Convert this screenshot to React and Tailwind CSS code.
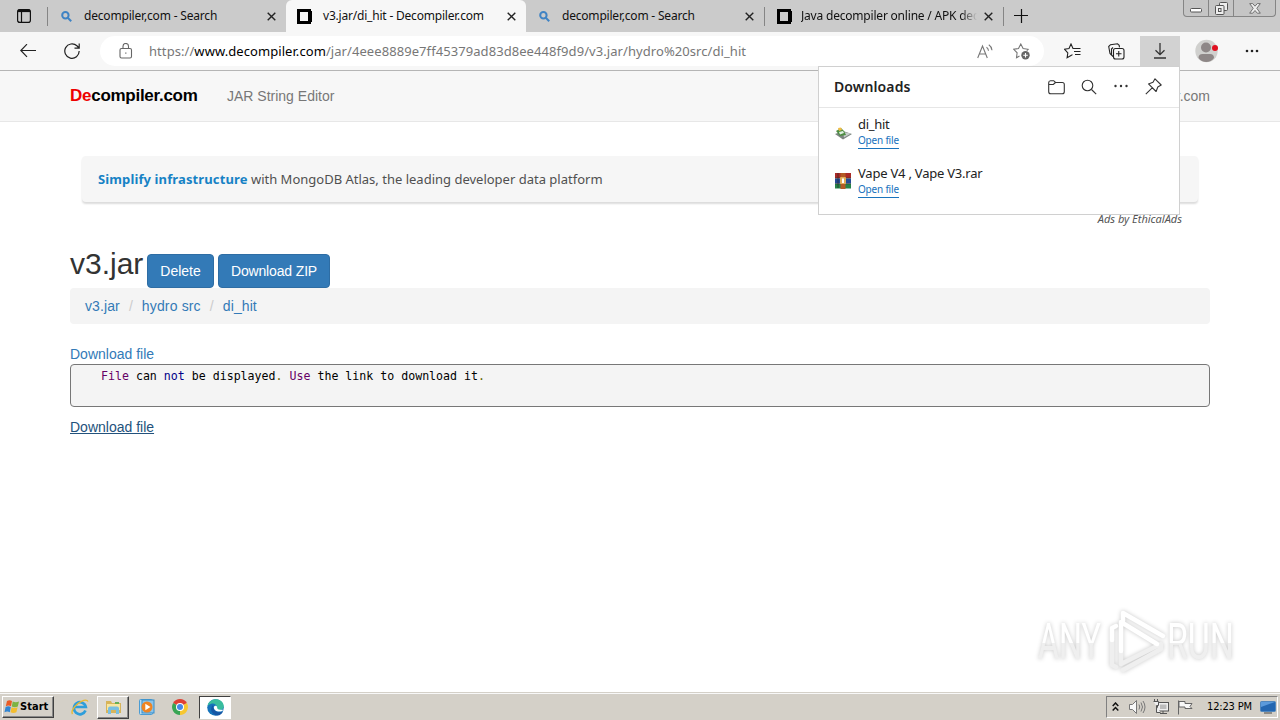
import React from 'react';

const ui = "font-['Noto_Sans',sans-serif]";
const arial = "font-['Liberation_Sans',sans-serif]";

const CloseIcon = () => (
  <svg width="9" height="9" viewBox="0 0 9 9" fill="none" stroke="#222" strokeWidth="1.4">
    <path d="M.7.7l7.6 7.6M8.3.7L.7 8.3" />
  </svg>
);

const SearchFavicon = () => (
  <svg className="ml-px" width="11" height="11" viewBox="0 0 11 11" fill="none" stroke="#3f83c4" strokeWidth="2">
    <circle cx="4.4" cy="4.2" r="3.2" />
    <path d="M6.8 6.8L10.2 10.2" />
  </svg>
);

const DecompilerFavicon = () => (
  <svg width="15" height="15" viewBox="0 0 15 15" fill="none">
    <rect x="1.5" y="1.5" width="11" height="12" stroke="#000" strokeWidth="3" />
    <path fill="#000" d="M13 2h2v11h-2z" />
  </svg>
);

const Tab = ({ title, icon, active, clip, titleClass }) => (
  <div className={`flex h-8 shrink-0 items-center ${active ? 'w-[240px] rounded-t-md bg-[#f7f7f7] pl-[11px]' : 'w-[238px] pl-3'}`}>
    <div className="flex w-[17px] shrink-0">{icon}</div>
    <div className={`shrink-0 whitespace-nowrap text-[12px] leading-[18px] text-[#111] ${ui} ${titleClass} ${clip ? '[mask-image:linear-gradient(to_right,black_160px,transparent_176px)]' : ''}`}>
      {title}
    </div>
    <div className="ml-auto pr-[10px]"><CloseIcon /></div>
  </div>
);

const TabStrip = () => (
  <div className="flex h-8 shrink-0 bg-[#cbcbcb]">
    <div className="flex w-[47px] items-center justify-center">
      <svg width="14" height="14" viewBox="0 0 14 14" fill="none" stroke="#111">
        <rect x=".6" y=".6" width="12.8" height="12.8" rx="2.2" strokeWidth="1.2" />
        <path d="M1 2.5h12M4.5 3v10" strokeWidth="1.2" />
        <path d="M1 1.8h12" strokeWidth="2.6" />
      </svg>
    </div>
    <div className="mt-[7px] h-[19px] w-px bg-[#858585]" />
    <Tab title="decompiler,com - Search" icon={<SearchFavicon />} titleClass="ml-[7px] tracking-[-0.18px]" />
    <Tab title="v3.jar/di_hit - Decompiler.com" icon={<DecompilerFavicon />} active titleClass="ml-[9px] tracking-[-0.2px]" />
    <Tab title="decompiler,com - Search" icon={<SearchFavicon />} titleClass="ml-[7px] tracking-[-0.2px]" />
    <div className="mt-[7px] h-[19px] w-px bg-[#858585]" />
    <Tab title="Java decompiler online / APK dec" icon={<DecompilerFavicon />} clip titleClass="ml-[7px] tracking-[-0.2px]" />
    <div className="mt-[7px] h-[19px] w-px bg-[#858585]" />
    <svg className="mt-[9px] ml-[10px]" width="14" height="14" viewBox="0 0 14 14" stroke="#111" strokeWidth="1.2">
      <path d="M7.500 0v14M0 6.500h14" />
    </svg>
    {/* window controls */}
    <div className="mr-[4px] ml-auto flex h-[17px] w-[93px] overflow-hidden rounded-b-[4px] border border-t-0 border-[#858585] bg-[#c5c5c5]">
      <div className="flex w-[25px] items-end justify-center border-r border-[#858585] pb-[3px]">
        <svg width="12" height="5" viewBox="0 0 12 5"><rect x=".5" y=".5" width="11" height="3.5" rx="1" fill="#fff" stroke="#555" /></svg>
      </div>
      <div className="flex w-[25px] items-center justify-center border-r border-[#858585]">
        <svg width="13" height="13" viewBox="0 0 13 13" fill="#eee" stroke="#555">
          <rect x="4.5" y=".5" width="8" height="8" rx="1" />
          <rect x=".5" y="3.5" width="8.500" height="9" rx="1" />
          <rect x="3.500" y="6.500" width="2.500" height="3" />
        </svg>
      </div>
      <div className="flex flex-1 items-center justify-center">
        <svg width="12" height="11" viewBox="0 0 12 11" fill="#eee" stroke="#666" strokeWidth=".9">
          <path d="M.7.6h3L6 3.200 8.300.6h3L7.800 5.300l3.500 4.900h-3L6 7.500l-2.300 2.700h-3l3.500-4.900z" />
        </svg>
      </div>
    </div>
  </div>
);

const Toolbar = () => (
  <div className="flex h-[39px] shrink-0 items-center border-b border-[#b5b5b5] bg-[#f7f7f7]">
    <svg className="ml-5" width="16" height="14" viewBox="0 0 16 14" fill="none" stroke="#222" strokeWidth="1.2">
      <path d="M7 .2L.8 6.500 7 12.800M1 6.500h15" />
    </svg>
    <svg className="ml-[28px]" width="16" height="16" viewBox="0 0 16 16" fill="none" stroke="#222" strokeWidth="1.2">
      <path d="M15.200 8a7.200 7.200 0 1 1-2.300-5.200L15 5M15.200.5V5.200h-4.700" />
    </svg>
    <div className="ml-[20px] flex h-[30px] w-[944px] items-center rounded-full bg-white">
      <svg className="ml-[19px]" width="14" height="16" viewBox="0 0 14 16" fill="none" stroke="#666" strokeWidth="1.100">
        <rect x="1" y="5.500" width="11.500" height="9.500" rx="1.500" />
        <path d="M4 5.500V3.200a2.700 2.700 0 0 1 5.500 0v2.300" />
        <rect x="6.200" y="9.500" width="1.200" height="1.200" fill="#666" stroke="none" />
      </svg>
      <div className={`ml-4 pt-px whitespace-nowrap text-[13px] tracking-[0.07px] text-[#777] ${ui}`}>
        https://<span className="text-black">www.decompiler.com</span>/jar/4eee8889e7ff45379ad83d8ee448f9d9/v3.jar/hydro%20src/di_hit
      </div>
      <svg className="ml-auto" width="16" height="15" viewBox="0 0 16 15" fill="none" stroke="#777" strokeWidth="1.100">
        <path d="M.7 14L5.500 2l4.800 12M2.400 10h6.200M9.500 3.200c1.200.8 1.900 2 2 3.500M11.800.8c2 1.300 3 3.200 3.200 5.500" />
      </svg>
      <svg className="mr-[14px] ml-[20px]" width="17" height="17" viewBox="0 0 17 17" fill="none" stroke="#777" strokeWidth="1.100">
        <path d="M6.500 13L3.500 14.800l.6-5L.7 6.300l4.800-.8L7.800 1l2.300 4.500 5 .8-1.300 1.300" />
        <circle cx="12.500" cy="12.300" r="4.200" fill="#666" stroke="none" />
        <path d="M12.500 10v4.600M10.200 12.300h4.600" stroke="#fff" />
      </svg>
    </div>
    <svg className="ml-[20px]" width="17" height="16" viewBox="0 0 17 16" fill="none" stroke="#222" strokeWidth="1.100">
      <path d="M9.500 5.500H9L7 1 5 5.500l-4.500.7L3.800 10l-.7 4.800L7 12.500l1.500-.9M9.500 5.500h7M10 8.500h6.500M11 11.500h5.500" />
    </svg>
    <svg className="ml-[27px]" width="17" height="17" viewBox="0 0 17 17" fill="none" stroke="#222" strokeWidth="1.100">
      <path d="M3.500 12L2 10.500.7 3.500 2.500 1.700l7-.9 1.700 1.500.3 2M5 4.500L3.500 6v6L5 13.500" />
      <rect x="5.500" y="5.500" width="10.500" height="10.500" rx="2" />
      <path d="M10.750 8v5.500M8 10.750h5.500" />
    </svg>
    <div className="ml-[15px] flex h-[30px] w-10 items-center justify-center bg-[#d2d2d2]">
      <svg width="13" height="16" viewBox="0 0 13 16" fill="none" stroke="#333" strokeWidth="1.300">
        <path d="M6 0v11.500M1.500 7.200L6 11.700l4.500-4.500M0 15h12" />
      </svg>
    </div>
    <svg className="ml-[15px]" width="24" height="24" viewBox="0 0 24 24">
      <circle cx="11.500" cy="12" r="11.200" fill="#d0d0ce" />
      <circle cx="11" cy="8.500" r="5" fill="#8e8787" />
      <path d="M3.500 19q0-4 4-4h7.500q4 0 4 4c-3.500 5.300-12 5.300-15.500 0z" fill="#8e8787" />
      <circle cx="20" cy="9" r="3" fill="#e01020" />
    </svg>
    <svg className="ml-[26px]" width="14" height="4" viewBox="0 0 14 4" fill="#222">
      <circle cx="2" cy="2" r="1.300" /><circle cx="7" cy="2" r="1.300" /><circle cx="12" cy="2" r="1.300" />
    </svg>
  </div>
);

const DownloadItem = ({ name, icon, nameClass }) => (
  <div className="flex h-[49px] items-start pl-4">
    <div className="mt-[12px] w-[23px]">{icon}</div>
    <div className="flex flex-col items-start">
      <span className={`text-[13px] leading-[18px] whitespace-pre text-[#222] ${nameClass}`}>{name}</span>
      <span className="h-4 border-b border-[#1b74bd] text-[10px] leading-[14px] tracking-[-0.2px] text-[#1671bd]">Open file</span>
    </div>
  </div>
);

const DownloadsPanel = () => (
  <div className={`absolute top-[66px] left-[818px] h-[149px] w-[362px] border border-[#d0d0d0] bg-white ${ui}`}>
    <div className="flex h-[41px] items-center border-b border-[#e6e6e6] pl-[15px]">
      <div className="pb-[2px] text-[14px] font-semibold tracking-[0.1px] text-[#222]">Downloads</div>
      <svg className="ml-auto" width="17" height="15" viewBox="0 0 17 15" fill="none" stroke="#333" strokeWidth="1.100">
        <path d="M.7 2.700Q.7.700 2.500.7h3.200L7.500 2.500h6.800q2 0 2 2v7.300q0 2-2 2H2.700q-2 0-2-2zM.8 4.500h4.500L7.500 2.500" />
      </svg>
      <svg className="ml-4" width="16" height="16" viewBox="0 0 16 16" fill="none" stroke="#333" strokeWidth="1.100">
        <circle cx="6.500" cy="6.500" r="5.300" /><path d="M10.500 10.500l4.700 4.700" />
      </svg>
      <svg className="mb-[2px] ml-[17px]" width="14" height="4" viewBox="0 0 14 4" fill="#333">
        <circle cx="1.500" cy="2" r="1.200" /><circle cx="7" cy="2" r="1.200" /><circle cx="12.500" cy="2" r="1.200" />
      </svg>
      <svg className="mr-[17px] mb-[2px] ml-[17px]" width="17" height="17" viewBox="0 0 17 17" fill="none" stroke="#333" strokeWidth="1.100">
        <path d="M10 .8L16.200 7 12.800 9l-1.700 4.500-7.600-7.600L8 4.300zM7.200 9.800L.8 16.200" strokeLinejoin="round" />
      </svg>
    </div>
    <div className="pt-[7px]">
      <DownloadItem
        name="di_hit"
        nameClass="tracking-[-0.3px]"
        icon={
          <svg width="17" height="13" viewBox="0 0 17 13">
            <path fill="#7c8580" d="M0 7l8-3 9 3-9 5.500z" />
            <path fill="#c6cecb" d="M8 5l8 1.500-7 4z" />
            <path fill="#4d8d42" d="M1 4l5-3 3 3 2 4-6 1z" />
            <path fill="#f1bc43" d="M3 1l3-.5 1 2.500-3 1z" />
            <path fill="#dff0e3" d="M4 5l4-1 1 2-4 1.500z" />
          </svg>
        }
      />
      <DownloadItem
        name="Vape V4 , Vape V3.rar"
        nameClass="tracking-[-0.22px]"
        icon={
          <svg className="-mt-[3px]" width="16" height="16" viewBox="0 0 16 16">
            <path fill="#a92b27" d="M0 0h16v5H0z" />
            <path fill="#244b94" d="M0 5.500h16v5H0z" />
            <path fill="#258348" d="M0 11h16v4.500H0z" />
            <path fill="#b35a24" d="M5.500 0h5v16h-5z" />
            <rect x="5" y="4" width="6" height="7" rx="1" fill="#e1ad58" />
            <path fill="#fff" d="M7 5.500h2V10H7z" />
            <path stroke="#222" strokeOpacity=".6" d="M0 5.200h5M11 5.200h5M0 10.700h5M11 10.700h5M3 0v15" />
          </svg>
        }
      />
    </div>
  </div>
);

const Navbar = () => (
  <div className={`flex h-[51px] shrink-0 items-center border-b border-[#e7e7e7] bg-[#f7f7f7] px-[70px] ${arial}`}>
    <div className="w-[157px] text-[17px] font-bold tracking-[-0.27px] text-black"><span className="text-[#e00]">De</span>compiler.com</div>
    <div className="text-[14px] text-[#777]">JAR String Editor</div>
    <div className="ml-auto text-[14px] text-[#777]">Decompiler.com</div>
  </div>
);

const Page = () => (
  <div className={`flex flex-1 flex-col bg-white px-[70px] pt-[34px] text-[14px] leading-5 ${arial}`}>
    <div className={`mx-3 flex h-[46px] items-center rounded bg-[#f6f6f6] px-4 text-[13px] text-[#505050] shadow-[0_2px_2px_rgba(0,0,0,0.14)] ${ui}`}>
      <div><b className="tracking-[0.12px] text-[#1682c5]">Simplify infrastructure</b> with MongoDB Atlas, the leading developer data platform</div>
    </div>
    <div className={`mt-[9px] mr-[28px] h-4 self-end text-[11px] leading-4 text-[#555] italic ${ui}`}>Ads by EthicalAds</div>
    <div className="mt-[27px] flex h-[34px]">
      <h1 className="-mt-[7px] w-[77px] text-[30px] leading-[33px] text-[#333]">v3.jar</h1>
      <button className="mr-1 w-[67px] rounded border border-[#2e6da4] bg-[#337ab7] text-white">Delete</button>
      <button className="w-[112px] rounded border border-[#2e6da4] bg-[#337ab7] tracking-[-0.15px] text-white">Download ZIP</button>
    </div>
    <div className="flex h-9 items-center rounded bg-[#f4f4f4] px-[15px] text-[#337ab7]">
      <a className="tracking-[0.1px]">v3.jar</a>
      <span className="w-[22px] text-center text-[#ccc]">/</span>
      <a className="tracking-[0.15px]">hydro src</a>
      <span className="w-[22px] text-center text-[#ccc]">/</span>
      <a className="tracking-[0.1px]">di_hit</a>
    </div>
    <a className="mt-5 self-start text-[#337ab7]">Download file</a>
    <pre className="h-[43px] rounded border border-[#777] bg-[#f4f4f4] pt-[3px] pl-[30px] font-['DejaVu_Sans_Mono',monospace] text-[11.6px] leading-4 text-black">
      <span className="text-[#660066]">File</span> can <span className="text-[#000088]">not</span> be displayed<span className="text-[#666600]">.</span> <span className="text-[#660066]">Use</span> the link to download it<span className="text-[#666600]">.</span>
    </pre>
    <a className="mt-[10px] self-start text-[#23527c] underline">Download file</a>
  </div>
);

const Watermark = () => (
  <svg className="absolute top-[604px] left-[1030px] drop-shadow-[0_0_2px_rgba(0,0,0,0.22)]" width="245" height="76" viewBox="0 0 245 76">
    <defs>
      <linearGradient id="fade" gradientUnits="userSpaceOnUse" x1="0" y1="19" x2="0" y2="57">
        <stop offset=".52" stopColor="#fff" />
        <stop offset=".52" stopColor="#efefef" />
      </linearGradient>
    </defs>
    <g fill="url(#fade)" fontFamily="Roboto" fontWeight="400" fontSize="50">
      <text x="8" y="55" textLength="63" lengthAdjust="spacingAndGlyphs">ANY</text>
      <text x="137" y="55" textLength="67" lengthAdjust="spacingAndGlyphs">RUN</text>
    </g>
    <g fill="none" strokeWidth="4.500" strokeLinejoin="round" strokeLinecap="round">
      <path stroke="#efefef" d="M82 36V61l4 2M91 48V60L131 40v5L93 66" />
      <path stroke="#fff" d="M82 36V24l4-2M91 47V18l36 22M93 17v-8l40 23" />
    </g>
  </svg>
);

const EdgeIcon = () => (
  <svg width="17" height="17" viewBox="0 0 17 17">
    <circle cx="8.500" cy="8.500" r="8.300" fill="#1573bb" />
    <path fill="#39bd9e" d="M.5 7C2-2 16-2 16.800 7c.2 4-5 5-7 2.700C11 7 8 4 5 4.500 3 5 1.500 6 .5 7z" />
    <path fill="#1556a5" d="M6 6c-4 4-1 9.500 4 10.500 3 .2 5-2 6-4-5 2-10 0-10-6.500z" />
    <path fill="#fff" d="M6.800 8.200c1-2 2.700-1.700 3.400-.2-.5 1.500.5 2.500 3 2.700h3c-1 2-3.500 2-5.200 1.700-2.700-.4-4.200-2-4.200-4.200z" />
  </svg>
);

const Taskbar = () => (
  <div className="flex h-[27px] shrink-0 items-center border-t border-[#f8f8f8] bg-[#d4d0c8] font-['DejaVu_Sans_Condensed','DejaVu_Sans',sans-serif] text-[11px] text-black shadow-[0_-1px_0_#d4d0c8]">
    <div className="ml-[2px] flex h-[22px] w-[52px] items-center border border-t-white border-r-[#404040] border-b-[#404040] border-l-white pl-px shadow-[inset_-1px_-1px_0_#888]">
      <svg width="16" height="16" viewBox="0 0 16 16">
        <path fill="#e95b25" d="M3 2q2.500-1.500 5 0L7 7.200q-2.500-1.500-5.200 0z" />
        <path fill="#7db343" d="M8.700 2.500q3 1.500 6.300 0l-1.200 5q-3 1.500-6 0z" />
        <path fill="#3185d2" d="M1.600 8q2.700-1.500 5.200 0l-1 5.200q-2.500-1.500-5.300 0z" />
        <path fill="#f3bd2f" d="M7.600 8.300q3 1.500 6 0l-1.200 5q-3 1.500-5.900 0z" />
      </svg>
      <span className="text-[11px] font-bold tracking-[0.05px]">Start</span>
    </div>
    <svg className="ml-[17px]" width="18" height="17" viewBox="0 0 18 17" fill="none">
      <path d="M14.500 11.500A6 6 0 1 1 14.800 8H4" stroke="#2e9edb" strokeWidth="2.700" />
      <path d="M1.500 15C-2 10 14-3 17 2.500" stroke="#e8b933" strokeWidth="1.400" />
    </svg>
    <div className="ml-[8px] flex h-[23px] w-[32px] items-center justify-center border border-t-white border-r-[#404040] border-b-[#404040] border-l-white bg-[#dedbd5] shadow-[inset_-1px_-1px_0_#888]">
      <svg width="17" height="16" viewBox="0 0 17 16">
        <path fill="#d7b45a" d="M1 2h5l1 2h9v10H1z" />
        <path fill="#f8e6a0" d="M2 5h13v6H2z" />
        <path fill="#67af55" d="M10 3h4v2h-4z" />
        <path fill="#79bfe1" d="M3 15V9.500q0-2 2-2h7q2 0 2 2V15h-3v-4H6v4z" />
      </svg>
    </div>
    <svg className="ml-[10px]" width="16" height="16" viewBox="0 0 16 16">
      <rect x=".5" y=".5" width="13" height="15" rx="1" fill="#b8dbf1" stroke="#4b9cd3" />
      <rect x="3" y="1" width="12" height="13" fill="#8ac4eb" stroke="#368dc8" />
      <circle cx="8" cy="8" r="5.500" fill="#ee8423" />
      <path d="M6.300 4.800v6.400L11.500 8z" fill="#fff" />
    </svg>
    <svg className="ml-[17px]" width="16" height="16" viewBox="0 0 16 16">
      <path fill="#df4034" d="M8 8L1.100 4A8 8 0 0 1 14.900 4z" />
      <path fill="#38a554" d="M8 8L8 16A8 8 0 0 1 1.100 4z" />
      <path fill="#f7c72f" d="M8 8l6.900-4A8 8 0 0 1 8 16z" />
      <circle cx="8" cy="8" r="4" fill="#fff" /><circle cx="8" cy="8" r="3" fill="#4688e8" />
    </svg>
    <div className="ml-[11px] flex h-[23px] w-[32px] items-center justify-center border border-t-[#404040] border-r-white border-b-white border-l-[#404040] bg-white">
      <EdgeIcon />
    </div>
    {/* tray */}
    <div className="mr-[2px] ml-auto flex h-[22px] w-[172px] items-center border border-t-[#808080] border-r-white border-b-white border-l-[#808080] pl-[5px]">
      <svg width="7" height="10" viewBox="0 0 7 10" fill="none" stroke="#111" strokeWidth="1.500"><path d="M.7 4l2.800-3 2.800 3M.7 8.500l2.800-3 2.800 3" /></svg>
      <svg className="ml-[10px]" width="17" height="14" viewBox="0 0 17 14" fill="none" stroke="#777">
        <path fill="#f8f8f8" d="M.5 4.500h3l4-4v13l-4-4h-3z" />
        <path d="M10 4.500q1.500 2.500 0 5M12 2.500q3 4.500 0 9M14 1q4 6 0 12" />
      </svg>
      <svg className="ml-[7px]" width="17" height="16" viewBox="0 0 17 16" fill="#eee" stroke="#555">
        <rect x="4.500" y="3.500" width="11" height="8.500" />
        <path d="M7 14.500h7M10 12v2.500" />
        <path d="M.5 2.500h5v4h-2v7h4M1.500 0v2.500M4.500 0v2.500" />
        <rect x="7" y="5.500" width="6.500" height="4.500" fill="#bbb" stroke="none" />
      </svg>
      <svg className="ml-[7px]" width="17" height="15" viewBox="0 0 17 15" fill="#f8f8f8" stroke="#666">
        <path d="M1.500.5v14M2 1.500h6v2h7l-2 3 2 2H8v-1.500H2z" />
      </svg>
      <span className="ml-[13px] whitespace-nowrap text-[11px] tracking-[-0.15px]">12:23 PM</span>
      <svg className="mr-px ml-auto" width="16" height="13" viewBox="0 0 16 13">
        <rect x=".5" y=".5" width="15" height="10" rx="1" fill="#2467b1" stroke="#5187bd" />
        <path fill="#5b9adb" d="M1 1h14L1 6z" /><path fill="#444" d="M4 11.500h8v1H4z" />
      </svg>
    </div>
  </div>
);

export default function App() {
  return (
    <div className="relative flex h-[720px] w-[1280px] flex-col overflow-hidden bg-white">
      <TabStrip />
      <Toolbar />
      <Navbar />
      <Page />
      <Taskbar />
      <DownloadsPanel />
      <Watermark />
    </div>
  );
}
